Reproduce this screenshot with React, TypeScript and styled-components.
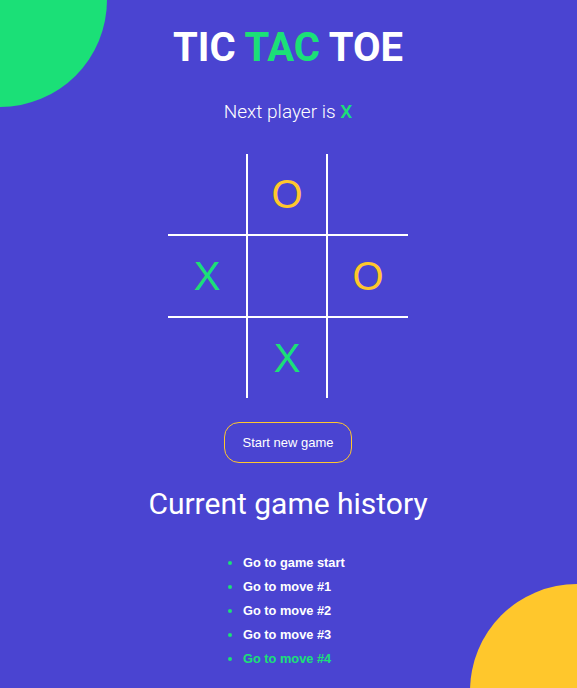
import React from "react";
import styled, { createGlobalStyle } from "styled-components";

const GREEN = "#1be077";
const YELLOW = "#ffc72c";
const BG = "#4a44d1";

const Global = createGlobalStyle`
  html, body { margin: 0; padding: 0; background: ${BG}; }
  body { font-family: Roboto, "Liberation Sans", sans-serif; color: #fff; }
`;

const Page = styled.div`
  position: relative;
  height: 100vh;
  overflow: hidden;
  box-sizing: border-box;
  padding-right: 1px;
  background: ${BG};
  display: flex;
  flex-direction: column;
  align-items: center;
`;

const Blob = styled.div<{ $corner: "tl" | "br"; $color: string }>`
  position: absolute;
  width: 214px;
  height: 214px;
  border-radius: 50%;
  background: ${(p) => p.$color};
  ${(p) =>
    p.$corner === "tl"
      ? "top: -107px; left: -107px;"
      : "bottom: -110px; right: -107px;"}
`;

const Title = styled.h1`
  margin: 24px 0 0;
  font-family: Roboto, sans-serif;
  font-weight: 700;
  font-size: 40px;
  line-height: 48px;
  color: #fff;
  position: relative;
`;

const Accent = styled.span`
  color: ${GREEN};
`;

const StatusMark = styled.span`
  color: ${GREEN};
  font-weight: 500;
`;

const Status = styled.p`
  margin: 28px 0 0;
  font-family: Roboto, sans-serif;
  font-weight: 300;
  font-size: 19px;
  line-height: 24px;
`;

const Board = styled.div`
  margin-top: 30px;
  display: grid;
  grid-template-columns: 80px 80px 80px;
  grid-template-rows: 82px 82px 80px;
`;

const Cell = styled.div<{ $right: boolean; $bottom: boolean; $mark: string }>`
  box-sizing: border-box;
  border-right: ${(p) => (p.$right ? "2px solid #fff" : "none")};
  border-bottom: ${(p) => (p.$bottom ? "2px solid #fff" : "none")};
  display: flex;
  align-items: center;
  justify-content: center;
  font-family: "Liberation Sans", Arial, sans-serif;
  font-size: 40px;
  color: ${(p) => (p.$mark === "X" ? GREEN : YELLOW)};
`;

const NewGame = styled.button`
  margin-top: 24px;
  width: 128px;
  height: 41px;
  box-sizing: border-box;
  border: 1px solid ${YELLOW};
  border-radius: 15px;
  background: transparent;
  color: #fff;
  font-family: "Liberation Sans", Arial, sans-serif;
  font-size: 13px;
  cursor: pointer;
`;

const HistoryTitle = styled.h2`
  margin: 24px 0 0;
  font-family: Roboto, sans-serif;
  font-weight: 400;
  font-size: 30px;
  line-height: 34px;
`;

const Moves = styled.ul`
  margin: 30px 0 0;
  width: 140px;
  box-sizing: border-box;
  padding-left: 25px;
  list-style: disc outside;
`;

const Move = styled.li`
  color: ${GREEN};
  line-height: 24px;
  font-size: 13px;
`;

const MoveButton = styled.button<{ $current: boolean }>`
  background: none;
  border: none;
  padding: 0;
  font-family: "Liberation Sans", Arial, sans-serif;
  font-size: 12.8px;
  font-weight: 700;
  color: ${(p) => (p.$current ? GREEN : "#fff")};
  cursor: pointer;
`;

const squares = [null, "O", null, "X", null, "O", null, "X", null];
const moves = ["Go to game start", "Go to move #1", "Go to move #2", "Go to move #3", "Go to move #4"];

export default function App() {
  return (
    <>
      <Global />
      <Page>
        <Blob $corner="tl" $color={GREEN} />
        <Blob $corner="br" $color={YELLOW} />
        <Title>
          TIC <Accent>TAC</Accent> TOE
        </Title>
        <Status>
          Next player is <StatusMark>X</StatusMark>
        </Status>
        <Board>
          {squares.map((s, i) => (
            <Cell key={i} $right={i % 3 < 2} $bottom={i < 6} $mark={s ?? ""}>
              {s}
            </Cell>
          ))}
        </Board>
        <NewGame>Start new game</NewGame>
        <HistoryTitle>Current game history</HistoryTitle>
        <Moves>
          {moves.map((m, i) => (
            <Move key={m}>
              <MoveButton $current={i === moves.length - 1}>{m}</MoveButton>
            </Move>
          ))}
        </Moves>
      </Page>
    </>
  );
}
